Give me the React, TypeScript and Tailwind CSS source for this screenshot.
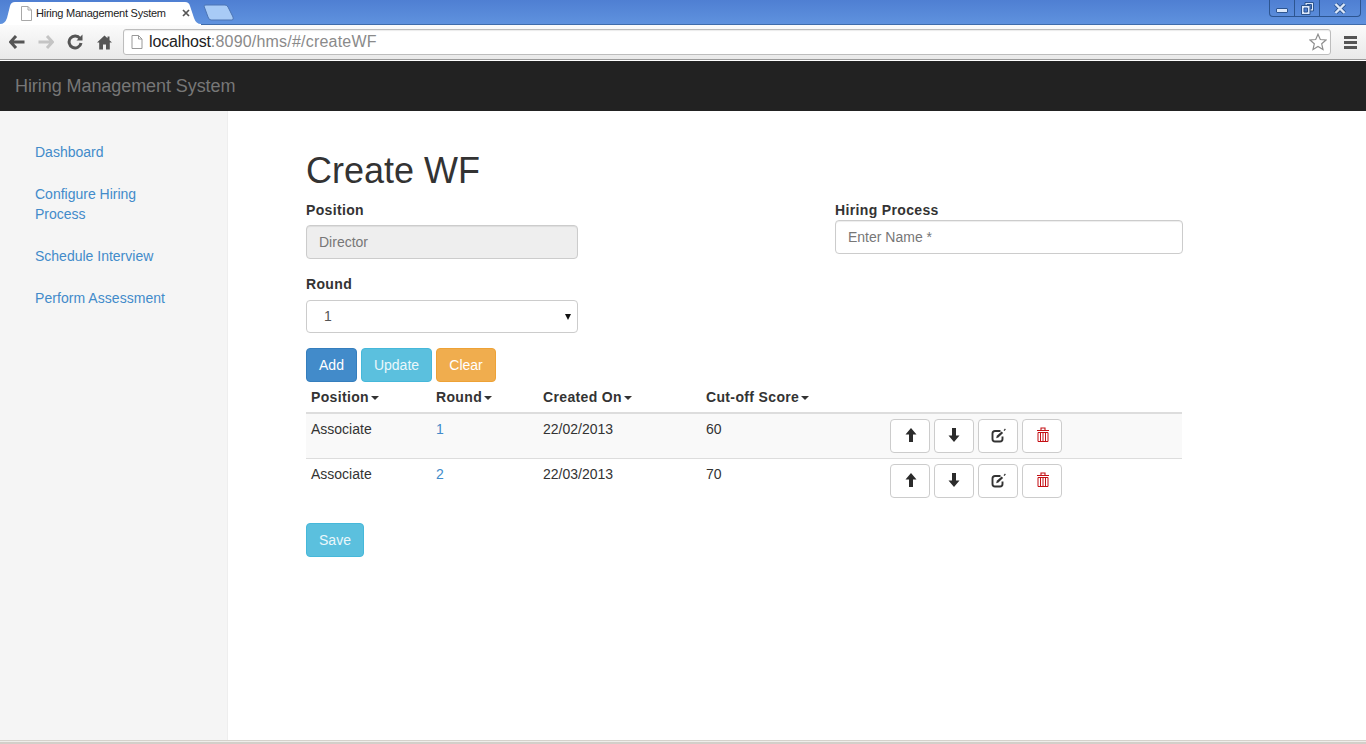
import { ReactNode } from 'react'

const navLinks = [
  { label: 'Dashboard', cls: 'h-[20px] mb-[22px]' },
  { label: 'Configure Hiring Process', cls: 'w-[120px] mb-[22px]' },
  { label: 'Schedule Interview', cls: 'h-[20px] mb-[22px]' },
  { label: 'Perform Assessment', cls: 'h-[20px] tracking-[0.05px]' },
]

const rows = [
  { position: 'Associate', round: '1', created: '22/02/2013', score: '60', striped: true },
  { position: 'Associate', round: '2', created: '22/03/2013', score: '70', striped: false },
]

function Caret() {
  return <span className="ml-[2px] inline-block align-middle border-x-[4px] border-t-[4px] border-x-transparent border-t-[#333]" />
}

function IconButton({ children }: { children: ReactNode }) {
  return (
    <button className="flex h-[34px] w-[40px] items-center justify-center rounded-[4px] border border-[#ccc] bg-white">
      {children}
    </button>
  )
}

function ArrowUpIcon() {
  return (
    <svg width="12" height="14" viewBox="0 0 12 14" className="ml-[1px] mt-[-2px]">
      <path d="M6 0 L11.5 6.5 L8 6.5 L8 14 L4 14 L4 6.5 L0.5 6.5 Z" fill="#2b2b2b" />
    </svg>
  )
}

function ArrowDownIcon() {
  return (
    <svg width="12" height="14" viewBox="0 0 12 14" className="mt-[-3px]">
      <path d="M6 14 L11.5 7.5 L8 7.5 L8 0 L4 0 L4 7.5 L0.5 7.5 Z" fill="#2b2b2b" />
    </svg>
  )
}

function EditIcon() {
  return (
    <svg width="15" height="15" viewBox="0 0 15 15" fill="none" className="mt-[-2px]">
      <path d="M9.5 3 H4 Q1.5 3 1.5 5.5 V11 Q1.5 13.5 4 13.5 H9 Q11.5 13.5 11.5 11 V8.5" stroke="#333" strokeWidth="1.9" />
      <path d="M5.2 10.2 L5.8 7.8 L10.6 3.4 L12.1 5 L7.4 9.6 Z" fill="#333" />
      <path d="M13 2.6 L14.4 1" stroke="#333" strokeWidth="1.2" />
    </svg>
  )
}

function TrashIcon() {
  return (
    <svg width="12" height="15" viewBox="0 0 12 15" fill="none" className="ml-[1px] mt-[-3px]">
      <path d="M0 3.5 H12 M4 3 V1 H8 V3" stroke="#c40f14" strokeWidth="1.1" />
      <path d="M1 5.5 H11 V14.5 H1 Z M3.5 5.5 V14.5 M6 5.5 V14.5 M8.5 5.5 V14.5" stroke="#c40f14" strokeWidth="1" />
    </svg>
  )
}

function BrowserChrome() {
  return (
    <div className="h-[61px] shrink-0 font-['Liberation_Sans',sans-serif]">
      {/* title bar + tabs */}
      <div className="relative h-[25px] border-b border-[#3f6cab] bg-gradient-to-b from-[#4f7fd2] to-[#5f92de]">
        <svg width="240" height="25" viewBox="0 0 240 25" className="absolute left-0 top-0">
          <path d="M0 24 Q5 24 7 18 L10 6 Q11 2 15 2 L185 2 Q189 2 190 6 L194 18 Q196 24 201 24 L201 25 L0 25 Z" fill="#ffffff" />
          <path d="M204 6 Q204 5 206 5 L225 5 Q227 5 228 7 L233 17 Q234 20 232 20 L211 20 Q209 20 208 17 Z" fill="#a8cbf6" stroke="#4c75b4" strokeWidth="1" />
        </svg>
        <div className="absolute left-[20px] top-[5px] flex h-[16px] items-center text-[11px] tracking-[-0.25px] text-[#222]">
          <svg width="13" height="15" viewBox="0 0 13 15" fill="none" className="mr-[3px]">
            <path d="M1.5 0.5 H8 L11.5 4 V14.5 H1.5 Z M8 0.5 V4 H11.5" fill="#fff" stroke="#a8a8a8" />
          </svg>
          <span>Hiring Management System</span>
        </div>
        <svg width="8" height="8" viewBox="0 0 8 8" className="absolute left-[182px] top-[9px]">
          <path d="M1 1 L7 7 M7 1 L1 7" stroke="#555" strokeWidth="1.7" />
        </svg>
        {/* window buttons */}
        <div className="absolute right-[5px] top-0 flex h-[17px] items-center rounded-b-[4px] border border-t-0 border-[#2d5590]">
          <div className="flex h-full w-[25px] items-center justify-center border-r border-[#2d5590]">
            <div className="mt-[4px] h-[5px] w-[12px] rounded-[1px] border border-[#2d5590] bg-[#dce8fa]" />
          </div>
          <div className="flex h-full w-[25px] items-center justify-center border-r border-[#2d5590]">
            <svg width="13" height="13" viewBox="0 0 13 13" fill="none">
              <path d="M4 0.5 H12.5 V9 H4 Z" fill="#dce8fa" stroke="#2d5590" />
              <path d="M6 2.5 H10.5 V7 H6 Z" fill="#4f7fd2" stroke="#2d5590" />
              <path d="M0.5 3.5 H9 V12.5 H0.5 Z" fill="#dce8fa" stroke="#2d5590" />
              <path d="M3 6 H6.5 V10 H3 Z" fill="#4f7fd2" stroke="#2d5590" />
            </svg>
          </div>
          <div className="flex h-full w-[40px] items-center justify-center">
            <svg width="12" height="11" viewBox="0 0 12 11">
              <path d="M1.5 1 L10.5 10 M10.5 1 L1.5 10" stroke="#2d5590" strokeWidth="4" />
              <path d="M1.5 1 L10.5 10 M10.5 1 L1.5 10" stroke="#dce8fa" strokeWidth="2.4" />
            </svg>
          </div>
        </div>
      </div>

      {/* toolbar */}
      <div className="flex h-[35px] items-center border-b border-[#9a9a9a] bg-gradient-to-b from-[#fbfbfb] to-[#e9e9e9] pl-[9px]">
        <svg width="16" height="14" viewBox="0 0 16 14" className="mr-[13px]">
          <path d="M7 1 L1.5 7 L7 13 M2 7 H15.5" fill="none" stroke="#555" strokeWidth="3" />
        </svg>
        <svg width="16" height="14" viewBox="0 0 16 14" className="mr-[13px]">
          <path d="M9 1 L14.5 7 L9 13 M14 7 H0.5" fill="none" stroke="#c4c4c4" strokeWidth="3" />
        </svg>
        <svg width="16" height="16" viewBox="0 0 16 16" className="mr-[14px]">
          <path d="M13 4.5 A6 6 0 1 0 14 9" fill="none" stroke="#555" strokeWidth="3" />
          <path d="M9.5 6.5 H15.5 V0.5 Z" fill="#555" />
        </svg>
        <svg width="15" height="15" viewBox="0 0 15 15" className="mr-[11px]">
          <path d="M7.5 0.5 L10.5 3.3 V1.5 H12.5 V5.2 L15 7.5 L12.8 7.5 V14.5 H9 V9.5 H6 V14.5 H2.2 V7.5 L0 7.5 Z" fill="#555" />
        </svg>
        <div className="flex h-[26px] w-[1208px] items-center rounded-[3px] border border-[#bdbdbd] bg-white pl-[7px] pr-[3px] shadow-[inset_0_1px_1px_rgba(0,0,0,0.08)]">
          <svg width="12" height="14" viewBox="0 0 12 14" fill="none" className="mr-[6px]">
            <path d="M1 0.5 H7.5 L11 4 V13.5 H1 Z M7.5 0.5 V4 H11" fill="#fff" stroke="#999" />
          </svg>
          <span className="text-[16px] tracking-[-0.15px] text-[#222]">localhost</span>
          <span className="text-[16px] tracking-[0.2px] text-[#8a8a8a]">:8090/hms/#/createWF</span>
          <svg width="18" height="18" viewBox="0 0 18 18" fill="none" className="ml-auto">
            <path d="M9 1.2 L11.3 6.5 L17 7 L12.7 10.8 L14 16.5 L9 13.5 L4 16.5 L5.3 10.8 L1 7 L6.7 6.5 Z" fill="#fff" stroke="#8e8e8e" strokeWidth="1.2" />
          </svg>
        </div>
        <div className="ml-[13px] flex w-[13px] flex-col gap-[2px]">
          <div className="h-[3px] bg-[#555]" />
          <div className="h-[3px] bg-[#555]" />
          <div className="h-[3px] bg-[#555]" />
        </div>
      </div>
    </div>
  )
}

function FieldLabel({ children }: { children: ReactNode }) {
  return <div className="h-[20px] text-[14px] font-bold leading-[20px] tracking-[0.35px] text-[#333]">{children}</div>
}

export default function App() {
  return (
    <div className="flex h-[744px] w-[1366px] flex-col overflow-hidden bg-white font-['Liberation_Sans',sans-serif] text-[14px] text-[#333]">
      <BrowserChrome />

      {/* Navbar */}
      <header className="flex h-[50px] shrink-0 items-center bg-[#222] px-[15px]">
        <span className="text-[18px] tracking-[-0.07px] text-[#777]">Hiring Management System</span>
      </header>

      <div className="flex h-[630px] shrink-0 border-b border-[#d6d2cc]">
        {/* Sidebar */}
        <aside className="w-[228px] shrink-0 border-r border-[#eee] bg-[#f5f5f5] pl-[35px] pt-[31px]">
          {navLinks.map(link => (
            <div key={link.label} className={`${link.cls} leading-[20px] text-[#428bca]`}>{link.label}</div>
          ))}
        </aside>

        {/* Main */}
        <main className="flex-1 pl-[78px] pt-[40px]">
          <h1 className="h-[40px] text-[36px] font-normal leading-[40px] text-[#333]">Create WF</h1>

          <div className="mt-[9px] flex">
            <div className="w-[529px]">
              <FieldLabel>Position</FieldLabel>
              <div className="mt-[5px] flex h-[34px] w-[272px] items-center rounded-[4px] border border-[#ccc] bg-[#eee] px-[12px] text-[#777] shadow-[inset_0_1px_1px_rgba(0,0,0,0.075)]">
                Director
              </div>
              <div className="mt-[15px]">
                <FieldLabel>Round</FieldLabel>
              </div>
              <div className="mt-[6px] flex h-[33px] w-[272px] items-center justify-between rounded-[4px] border border-[#ccc] bg-white pl-[17px] pr-[6px] text-[#555]">
                <span>1</span>
                <span className="border-x-[3.5px] border-t-[6px] border-x-transparent border-t-[#111]" />
              </div>
            </div>
            <div>
              <FieldLabel>Hiring Process</FieldLabel>
              <div className="flex h-[34px] w-[348px] items-center rounded-[4px] border border-[#ccc] bg-white px-[12px] text-[#777] shadow-[inset_0_1px_1px_rgba(0,0,0,0.075)]">
                Enter Name *
              </div>
            </div>
          </div>

          <div className="mt-[15px] flex gap-[4px] text-white">
            <button className="h-[34px] w-[51px] rounded-[4px] border border-[#357ebd] bg-[#428bca]">Add</button>
            <button className="h-[34px] w-[71px] rounded-[4px] border border-[#46b8da] bg-[#5bc0de] text-[#eaf7fb]">Update</button>
            <button className="h-[34px] w-[60px] rounded-[4px] border border-[#eea236] bg-[#f0ad4e]">Clear</button>
          </div>

          <table className="mt-[5px] w-[876px] table-fixed border-collapse">
            <colgroup>
              <col className="w-[125px]" />
              <col className="w-[107px]" />
              <col className="w-[163px]" />
              <col className="w-[184px]" />
              <col />
            </colgroup>
            <thead>
              <tr className="h-[26px] border-b-2 border-[#ddd] text-left tracking-[0.35px]">
                <th className="px-[5px] pb-[4px] font-bold">Position<Caret /></th>
                <th className="px-[5px] pb-[4px] font-bold">Round<Caret /></th>
                <th className="px-[5px] pb-[4px] font-bold">Created On<Caret /></th>
                <th className="px-[5px] pb-[4px] font-bold">Cut-off Score<Caret /></th>
                <th />
              </tr>
            </thead>
            <tbody>
              {rows.map(row => (
                <tr key={row.round} className={`border-b border-[#ddd] last:border-b-0 ${row.striped ? 'bg-[#f9f9f9]' : ''}`}>
                  <td className="h-[45px] px-[5px] pt-[5px] align-top leading-[20px]">{row.position}</td>
                  <td className="px-[5px] pt-[5px] align-top leading-[20px] text-[#428bca]">{row.round}</td>
                  <td className="px-[5px] pt-[5px] align-top leading-[20px]">{row.created}</td>
                  <td className="px-[5px] pt-[5px] align-top leading-[20px]">{row.score}</td>
                  <td className="px-[5px] py-[5px]">
                    <div className="flex gap-[4px]">
                      <IconButton><ArrowUpIcon /></IconButton>
                      <IconButton><ArrowDownIcon /></IconButton>
                      <IconButton><EditIcon /></IconButton>
                      <IconButton><TrashIcon /></IconButton>
                    </div>
                  </td>
                </tr>
              ))}
            </tbody>
          </table>

          <button className="mt-[19px] h-[34px] w-[58px] rounded-[4px] border border-[#46b8da] bg-[#5bc0de] pt-[1px] text-[#eaf7fb]">Save</button>
        </main>
      </div>
      <div className="h-[3px] shrink-0 border-t border-[#efedea] bg-[#d3cfc9]" />
    </div>
  )
}
